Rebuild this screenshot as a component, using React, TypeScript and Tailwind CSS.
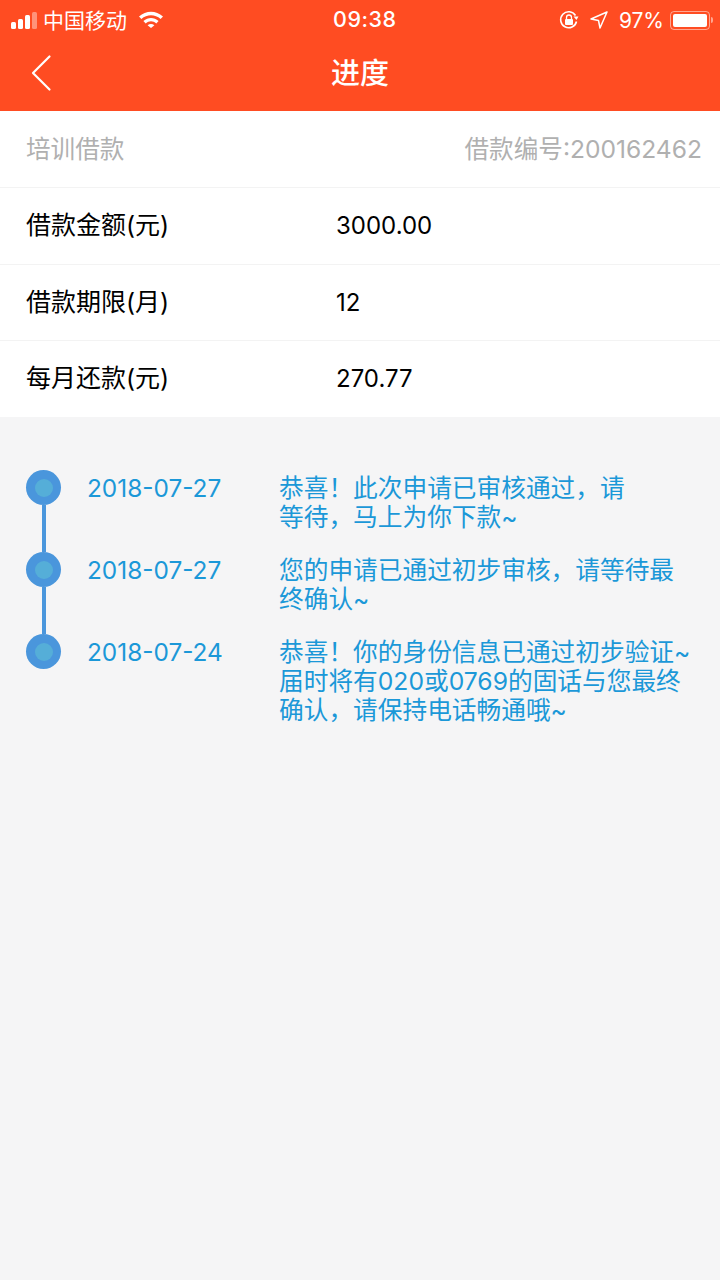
const infoRows = [
  { label: '借款金额(元)', value: '3000.00', h: 'h-[77px]' },
  { label: '借款期限(月)', value: '12', h: 'h-[76px]' },
  { label: '每月还款(元)', value: '270.77', h: 'h-[76px]' },
];

const steps = [
  { date: '2018-07-27', lines: ['恭喜！此次申请已审核通过，请', '等待，马上为你下款~'], h: 'h-[82px]' },
  { date: '2018-07-27', lines: ['您的申请已通过初步审核，请等待最', '终确认~'], h: 'h-[82px]' },
  { date: '2018-07-24', lines: ['恭喜！你的身份信息已通过初步验证~', '届时将有020或0769的固话与您最终', '确认，请保持电话畅通哦~'], h: '' },
];

const StatusBar = () => (
  <div className="h-[40px] relative flex items-center justify-between pl-[11px] pr-[7px] text-white">
    <div className="flex items-center">
      <div className="flex items-end gap-[2px] h-[17px]">
        <span className="w-[5px] h-[7px] bg-white rounded-[1.5px]" />
        <span className="w-[5px] h-[10px] bg-white rounded-[1.5px]" />
        <span className="w-[5px] h-[14px] bg-white rounded-[1.5px]" />
        <span className="w-[5px] h-[17px] bg-white/40 rounded-[1.5px]" />
      </div>
      <span className="ml-[6px] text-[21px] leading-none">中国移动</span>
      <svg className="ml-[11px] -mt-[2px]" width="26" height="18" viewBox="0 0 26 18">
        <path d="M1 6.5 C8 0 18 0 25 6.5 L22.6 9 C17 4 9 4 3.4 9 Z" fill="white" />
        <path d="M5.4 11 C10 7 16 7 20.6 11 L18.3 13.4 C15 10.6 11 10.6 7.7 13.4 Z" fill="white" />
        <path d="M9.6 15.2 C11.6 13.6 14.4 13.6 16.4 15.2 L13 18 Z" fill="white" />
      </svg>
    </div>
    <span className="absolute left-[333px] top-[6px] text-[21.5px] leading-[26px] font-medium tracking-[0.5px]">09:38</span>
    <div className="flex items-center">
      <svg width="20" height="20" viewBox="0 0 20 20" fill="none">
        <path d="M17.5 11.5 A8 8 0 1 1 16.5 5.5" stroke="white" strokeWidth="1.6" />
        <path d="M14.5 6.5 L19.5 6.5 L17.5 10 Z" fill="white" />
        <rect x="6" y="9" width="8" height="6" rx="1" fill="white" />
        <path d="M7.5 9 V7.5 a2.5 2.5 0 0 1 5 0 V9" stroke="white" strokeWidth="1.3" />
      </svg>
      <svg className="ml-[11px]" width="18" height="18" viewBox="0 0 18 18" fill="none">
        <path d="M17 1 L1 8 L8.5 9.5 L10 17 Z" stroke="white" strokeWidth="1.5" strokeLinejoin="round" />
      </svg>
      <span className="ml-[11px] text-[21px] leading-none">97%</span>
      <div className="ml-[6px] w-[40px] h-[19px] rounded-[4px] border border-white/50 p-[2px]">
        <div className="w-full h-full bg-white rounded-[2px]" />
      </div>
      <span className="ml-[1px] w-[2px] h-[6px] bg-white/50 rounded-r-[2px]" />
    </div>
  </div>
);

export default function App() {
  return (
    <div className="w-[720px] h-[1280px] bg-[#f5f5f6] flex flex-col overflow-hidden [font-family:'Inter','Noto_Sans_CJK_SC','Liberation_Sans',sans-serif]">
      <div className="bg-[#ff4c22] h-[111px] flex flex-col">
        <StatusBar />
        <div className="relative flex-1 flex items-center justify-center">
          <svg className="absolute left-[30px] top-[14px]" width="22" height="38" viewBox="0 0 22 38" fill="none">
            <path d="M19.5 2.5 L3 19 L19.5 35.5" stroke="white" strokeWidth="2.2" strokeLinecap="round" strokeLinejoin="round" />
          </svg>
          <span className="text-white text-[29px] leading-none font-medium -mt-[4px]">进度</span>
        </div>
      </div>

      <div className="bg-white">
        <div className="h-[77px] flex items-center justify-between pl-[26px] pr-[18px] border-b border-[#f3f3f3] text-[24.6px] text-[#b0b0b0]">
          <span>培训借款</span>
          <span>借款编号:200162462</span>
        </div>
        {infoRows.map((row, i) => (
          <div key={row.label} className={`${row.h} flex items-center pl-[26px] text-[25px] text-black ${i < 2 ? 'border-b border-[#f3f3f3]' : ''}`}>
            <span className="w-[310px]">{row.label}</span>
            <span className="text-[24px]">{row.value}</span>
          </div>
        ))}
      </div>

      <div className="pt-[53px] pl-[26px] text-[24.7px] text-[#1b98d8]">
        {steps.map((step, i) => (
          <div key={i} className={`flex ${step.h}`}>
            <div className="w-[35px] flex flex-col items-center shrink-0">
              <div className="w-[35px] h-[35px] rounded-full bg-[#4a96dc] flex items-center justify-center shrink-0">
                <div className="w-[18px] h-[18px] rounded-full bg-[#55aed8]" />
              </div>
              {i < 2 && <div className="w-[4px] flex-1 bg-[#4a96dc]" />}
            </div>
            <div className="w-[192px] ml-[26px] shrink-0 leading-[36px] text-[24.4px]">{step.date}</div>
            <div className="leading-[29px] pt-[4px] whitespace-nowrap">
              {step.lines.map((line) => (
                <div key={line}>{line}</div>
              ))}
            </div>
          </div>
        ))}
      </div>
    </div>
  );
}
